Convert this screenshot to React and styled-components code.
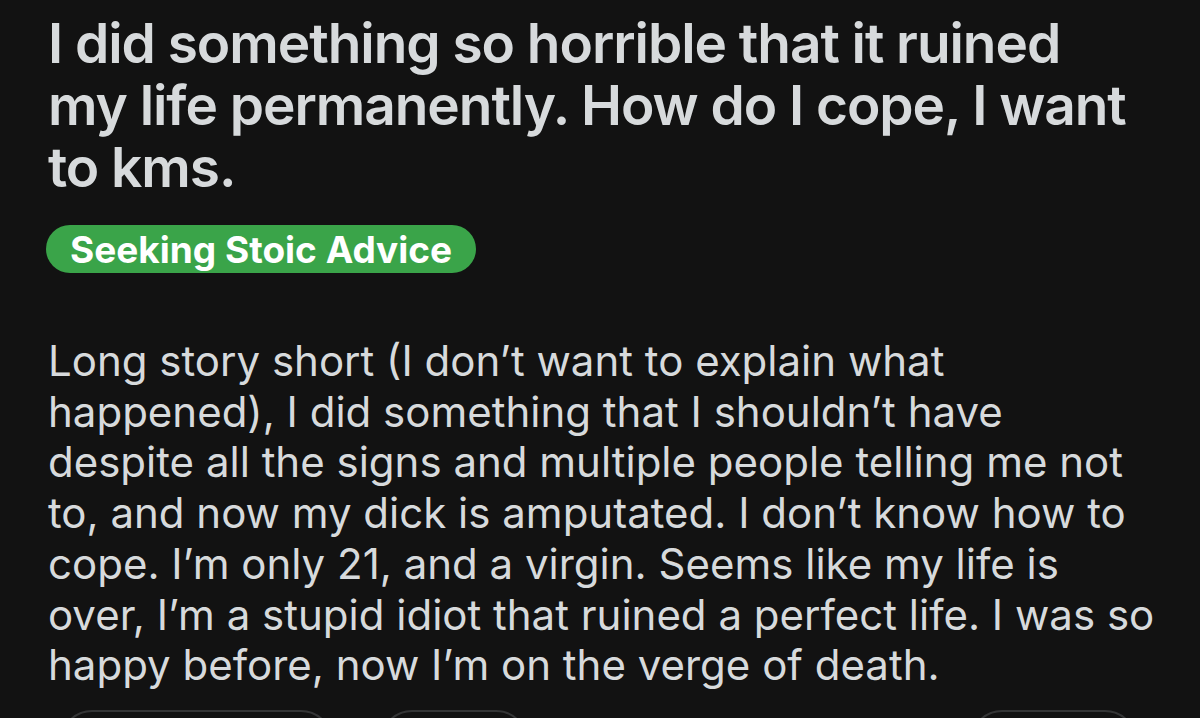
import React from "react";
import styled, { createGlobalStyle } from "styled-components";

const Global = createGlobalStyle`
  html, body { margin: 0; padding: 0; background: #121212; }
  body { overflow: hidden; }
`;

const Page = styled.div`
  width: 1200px;
  height: 718px;
  box-sizing: border-box;
  padding: 12px 0 0 48px;
  background: #121212;
  font-family: Inter, "Noto Sans", sans-serif;
  display: flex;
  flex-direction: column;
  align-items: flex-start;
  overflow: hidden;
`;

const Title = styled.h1`
  margin: 0;
  font-size: 55px;
  line-height: 62px;
  font-weight: 600;
  color: #d7dadc;
  letter-spacing: -1.05px;
`;

const Flair = styled.span`
  margin-top: 27px;
  height: 48px;
  box-sizing: border-box;
  padding: 0 24px;
  margin-left: -2px;
  border-radius: 24px;
  background: #3aa449;
  color: #ffffff;
  font-size: 37px;
  font-weight: 700;
  display: inline-flex;
  align-items: center;
  flex-shrink: 0;
`;

const Body = styled.p`
  margin: 63px 0 0;
  font-size: 42px;
  line-height: 50.7px;
  font-weight: 400;
  color: #d7dadc;
  white-space: nowrap;
`;

const Line = styled.span`
  display: block;
`;

const Actions = styled.div`
  margin-top: 19px;
  margin-left: 12px;
  display: flex;
  flex-shrink: 0;
`;

const Pill = styled.div`
  width: ${(p) => p.$w}px;
  margin-left: ${(p) => p.$ml}px;
  height: 64px;
  box-sizing: border-box;
  border: 2px solid #343536;
  border-radius: 32px;
  flex-shrink: 0;
`;

const lines = [
  "Long story short (I don\u2019t want to explain what",
  "happened), I did something that I shouldn\u2019t have",
  "despite all the signs and multiple people telling me not",
  "to, and now my dick is amputated. I don\u2019t know how to",
  "cope. I\u2019m only 21, and a virgin. Seems like my life is",
  "over, I\u2019m a stupid idiot that ruined a perfect life. I was so",
  "happy before, now I\u2019m on the verge of death.",
];

export default function App() {
  return (
    <>
      <Global />
      <Page>
        <Title>
          I did something so horrible that it ruined
          <br />
          my life permanently. How do I cope, I want
          <br />
          to kms.
        </Title>
        <Flair>Seeking Stoic Advice</Flair>
        <Body>
          {lines.map((l, i) => (
            <Line key={i}>{l}</Line>
          ))}
        </Body>
        <Actions>
          <Pill $w={273} $ml={0} />
          <Pill $w={148} $ml={47} />
          <Pill $w={167} $ml={442} />
        </Actions>
      </Page>
    </>
  );
}
